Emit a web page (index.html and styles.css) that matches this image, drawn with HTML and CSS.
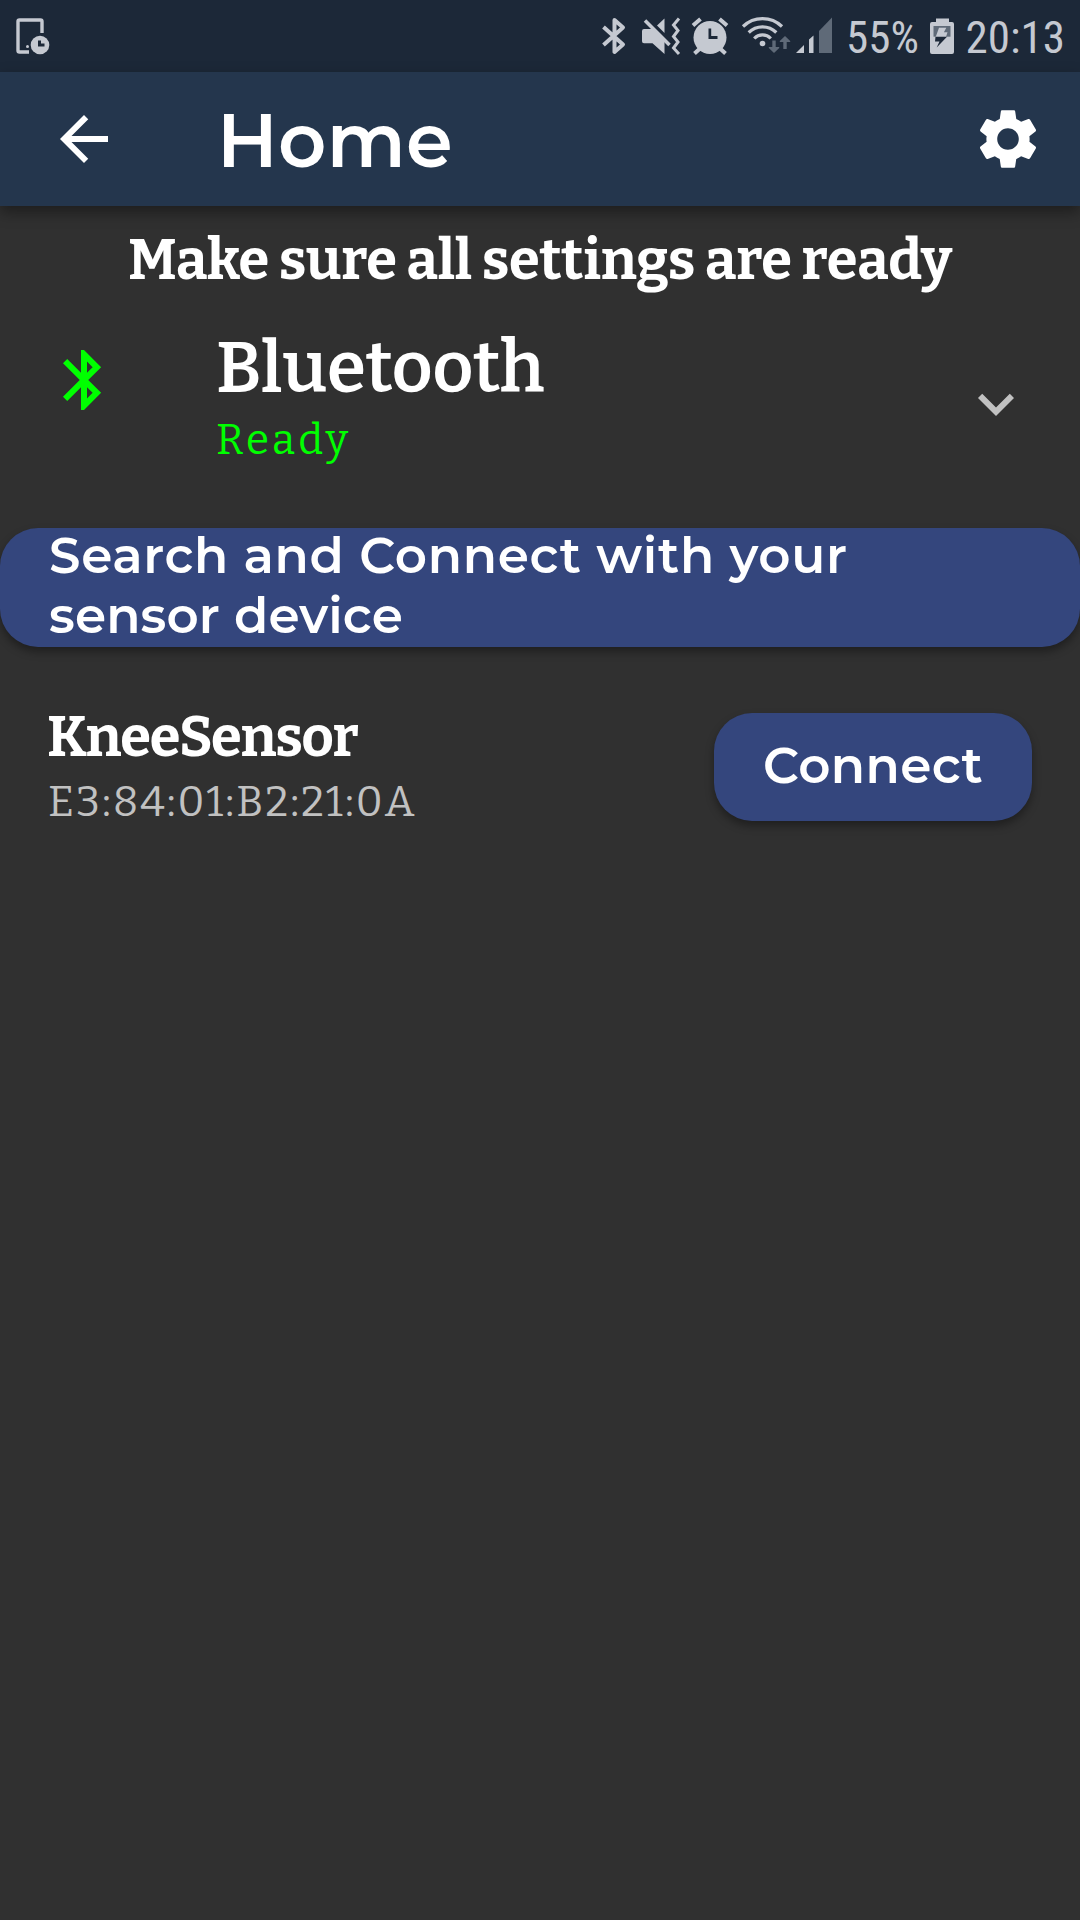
FILE: index.html
```html
<!DOCTYPE html>
<html lang="en">
<head>
<meta charset="utf-8">
<title>Home</title>
<link rel="stylesheet" href="styles.css">
</head>
<body>
<div class="screen">
  <header class="status-bar">
    <svg class="status-icon" width="36" height="40" viewBox="15 16 36 40">
      <path d="M42 33V21.500a1.500 1.500 0 0 0-1.500-1.500H19.500a1.500 1.500 0 0 0-1.500 1.500V50.500a1.500 1.500 0 0 0 1.500 1.500H29" fill="none" stroke="#c5c9d1" stroke-width="3.400"/>
      <circle cx="27.500" cy="46.500" r="1.500" fill="#c5c9d1"/>
      <circle cx="40" cy="45" r="9.300" fill="#c5c9d1"/>
      <path d="M38 40.500h3v3h3.500v3H38z" fill="#1c2838"/>
    </svg>
    <div class="status-right">
      <svg class="status-icon" width="26" height="40" viewBox="601 16 26 40">
        <path d="M603.500 27L623 44.500L614.500 52V20L623 27.500L603.500 45" fill="none" stroke="#c5c9d1" stroke-width="4" stroke-linejoin="round"/>
      </svg>
      <svg class="status-icon mute" width="40" height="40" viewBox="641 16 40 40">
        <path d="M644 29h9.500L664.500 40V54L652.500 43.300H644a2 2 0 0 1-2-2V31a2 2 0 0 1 2-2z" fill="#c5c9d1"/>
        <path d="M664.500 18.500V33L657 25.500z" fill="#c5c9d1"/>
        <path d="M645 20.500L669.500 45" stroke="#c5c9d1" stroke-width="3.600"/>
        <path d="M679 18.500L673.500 25L678 30.500L673.500 36.500L678 42L673.500 48L679 54" fill="none" stroke="#c5c9d1" stroke-width="3"/>
      </svg>
      <svg class="status-icon alarm" width="38" height="40" viewBox="691 16 38 40">
        <circle cx="710" cy="37.500" r="16.500" fill="#c5c9d1"/>
        <path d="M693 25.500L700.500 19M727 25.500L719.500 19M694.500 53.500L700 48.500M725.500 53.500L720 48.500" stroke="#c5c9d1" stroke-width="4"/>
        <path d="M708.500 28.500h2.700v7.500h6.300v3h-9z" fill="#1c2838"/>
      </svg>
      <svg class="status-icon wifi" width="50" height="40" viewBox="741 16 50 40">
        <path d="M743 26.500a28 28 0 0 1 39 0M748.700 32.500a19.500 19.500 0 0 1 27.600 0M754.200 38.500a11.500 11.500 0 0 1 16.600 0" fill="none" stroke="#c5c9d1" stroke-width="3.200"/>
        <circle cx="762.500" cy="43.500" r="2.800" fill="#c5c9d1"/>
        <path d="M772.300 40.500h3.400v6.500h3.500v1l-5.200 5-5.200-5v-1h3.500zM783.300 49h3.400v-7h3.500v-1l-5.200-5-5.200 5v1h3.500z" fill="#5f6a78"/>
      </svg>
      <svg class="status-icon signal" width="38" height="40" viewBox="795 16 38 40">
        <path d="M796 53L804 45v8zM809 53V39.500L813.500 35.500V53z" fill="#c5c9d1"/>
        <path d="M819 53V31L832 17.500V53z" fill="#5f6a78"/>
      </svg>
      <span class="status-text battery-level">55%</span>
      <svg class="status-icon" width="24" height="40" viewBox="930 16 24 40">
        <path d="M936 18.500h13v3.500h3a2 2 0 0 1 2 2V52a2 2 0 0 1-2 2H932a2 2 0 0 1-2-2V24a2 2 0 0 1 2-2h4z" fill="#c5c9d1"/>
        <path d="M933.500 26h17v10.700h-17z" fill="#5f6a78"/>
        <path d="M939 27.700h7.300l-2.400 4.500h3.600l-1.500 4.700h-10.300z" fill="#c5c9d1"/>
        <path d="M935.500 36.700h11.500L936.700 47.500l2.800-6h-4.500z" fill="#1c2838"/>
      </svg>
      <span class="status-text clock">20:13</span>
    </div>
  </header>

  <nav class="app-bar">
    <svg class="icon" viewBox="0 0 24 24" fill="#fff"><path d="M20 11H7.830l5.590-5.590L12 4l-8 8 8 8 1.410-1.410L7.830 13H20v-2z"/></svg>
    <h1 class="app-title">Home</h1>
    <svg class="icon" viewBox="0 0 24 24" fill="#fff"><path d="M19.140,12.940c0.040-0.300,0.060-0.610,0.060-0.940c0-0.320-0.020-0.640-0.070-0.940l2.030-1.580c0.180-0.140,0.230-0.410,0.120-0.610l-1.920-3.320c-0.120-0.220-0.370-0.290-0.590-0.220l-2.390,0.960c-0.500-0.380-1.030-0.700-1.620-0.940L14.400,2.810c-0.040-0.240-0.240-0.410-0.480-0.410h-3.840c-0.240,0-0.430,0.170-0.470,0.410L9.250,5.350C8.660,5.590,8.120,5.920,7.630,6.290L5.240,5.330c-0.220-0.080-0.470,0-0.590,0.220L2.740,8.870C2.620,9.080,2.660,9.340,2.860,9.480l2.030,1.580C4.840,11.360,4.800,11.690,4.800,12s0.020,0.640,0.070,0.940l-2.030,1.580c-0.180,0.140-0.230,0.410-0.120,0.610l1.920,3.320c0.120,0.220,0.370,0.290,0.590,0.220l2.390-0.960c0.500,0.380,1.030,0.700,1.620,0.940l0.360,2.540c0.050,0.240,0.240,0.410,0.480,0.410h3.840c0.240,0,0.440-0.170,0.470-0.410l0.360-2.540c0.590-0.240,1.130-0.560,1.620-0.940l2.390,0.960c0.220,0.080,0.470,0,0.590-0.220l1.920-3.320c0.120-0.220,0.070-0.470-0.120-0.610L19.140,12.940z M12,15.600c-1.980,0-3.600-1.620-3.600-3.600s1.620-3.600,3.600-3.600s3.600,1.620,3.600,3.600S13.980,15.600,12,15.600z"/></svg>
  </nav>

  <main class="content">
    <h2 class="heading">Make sure all settings are ready</h2>

    <section class="bluetooth">
      <svg class="icon bluetooth-icon" viewBox="0 0 24 24" fill="#0f0"><path d="M17.710 7.710L12 2h-1v7.590L6.410 5 5 6.410 10.590 12 5 17.590 6.410 19 11 14.410V22h1l5.710-5.710-4.300-4.290 4.300-4.290zM13 5.830l1.880 1.880L13 9.590V5.830zm1.880 10.460L13 18.170v-3.760l1.880 1.880z"/></svg>
      <div class="bluetooth-text">
        <div class="bluetooth-title">Bluetooth</div>
        <div class="bluetooth-state">Ready</div>
      </div>
      <svg class="icon chevron" viewBox="0 0 24 24" fill="#c1c1c1"><path d="M16.590 8.590L12 13.170 7.410 8.590 6 10l6 6 6-6z"/></svg>
    </section>

    <button class="button search-button">
      <span class="line-one">Search and Connect with your</span>
      <span class="line-two">sensor device</span>
    </button>

    <section class="device">
      <div class="device-text">
        <div class="device-name">KneeSensor</div>
        <div class="device-address">E3:84:01:B2:21:0A</div>
      </div>
      <button class="button connect-button">Connect</button>
    </section>
  </main>
</div>
</body>
</html>
```
FILE: styles.css
```css
* { box-sizing: border-box; }

body {
  margin: 0;
  background: #303030;
  color: #fff;
  font-family: Bitter, "DejaVu Serif Condensed", serif;
}

.screen {
  width: 1080px;
  height: 1920px;
  display: flex;
  flex-direction: column;
}

.status-bar {
  height: 72px;
  padding: 0 15px;
  display: flex;
  justify-content: space-between;
  align-items: center;
  background: #1c2838;
}

.status-right {
  display: flex;
  align-items: center;
  height: 72px;
}

.status-icon { flex: none; display: block; }

.mute { margin-left: 14px; }
.alarm { margin-left: 10px; }
.wifi { margin-left: 12px; }
.signal { margin-left: 4px; }

.status-text {
  color: #c5c9d1;
  font-family: Roboto, sans-serif;
  font-stretch: 75%;
  font-size: 45px;
  line-height: 72px;
  padding-top: 4px;
  white-space: nowrap;
}

.battery-level { width: 84px; margin-left: 13px; }
.clock { width: 99.500px; margin-left: 11.500px; }

.app-bar {
  height: 134px;
  padding: 0 36px 0 48px;
  display: flex;
  align-items: center;
  background: #24364d;
  box-shadow: 0 6px 14px rgba(0, 0, 0, .4);
}

.icon { width: 72px; height: 72px; flex: none; display: block; }

.app-title {
  flex: 1;
  margin: 0 0 0 97px;
  padding-top: 1px;
  font: 600 75px/134px Montserrat, Inter, sans-serif;
  letter-spacing: .3px;
}

.content { display: flex; flex-direction: column; }

.heading {
  height: 108px;
  margin: 0;
  padding-top: 1px;
  text-align: center;
  font-weight: 700;
  font-size: 56px;
  line-height: 108px;
  letter-spacing: -.270px;
}

.bluetooth {
  height: 213.500px;
  padding: 14px 48px;
  display: flex;
}

.bluetooth-icon { margin-top: 16px; }

.bluetooth-text { flex: 1; margin-left: 96px; }

.bluetooth-title { font-weight: 650; font-size: 71px; line-height: 82px; letter-spacing: -.150px; }

.bluetooth-state { color: #0f0; font-size: 42px; line-height: 60px; letter-spacing: 3.200px; }

.chevron { margin-top: 40px; }

.button {
  border: 0;
  color: #fff;
  background: #34467d;
  border-radius: 38px;
  box-shadow: 0 5px 8px rgba(0, 0, 0, .35);
  font: 600 50px/60px Montserrat, Inter, sans-serif;
}

.search-button {
  height: 119.500px;
  padding: 0 49px;
  display: flex;
  flex-direction: column;
  align-items: flex-start;
  justify-content: center;
  line-height: 60px;
}

.search-button span { margin-top: -1px; margin-bottom: 1px; white-space: nowrap; }
.line-one { letter-spacing: .720px; }
.line-two { letter-spacing: .150px; }

.device {
  padding: 58px 48px 0;
  display: flex;
  justify-content: space-between;
}

.device-name { margin-left: -1px; font-weight: 700; font-size: 56px; line-height: 65px; letter-spacing: -1.300px; }
.device-address { color: #c1c1c1; font-size: 42px; line-height: 65px; letter-spacing: 2px; }

.connect-button {
  width: 318px;
  height: 108px;
  margin-top: 8px;
  padding: 0 0 2px;
  letter-spacing: .400px;
}
```
